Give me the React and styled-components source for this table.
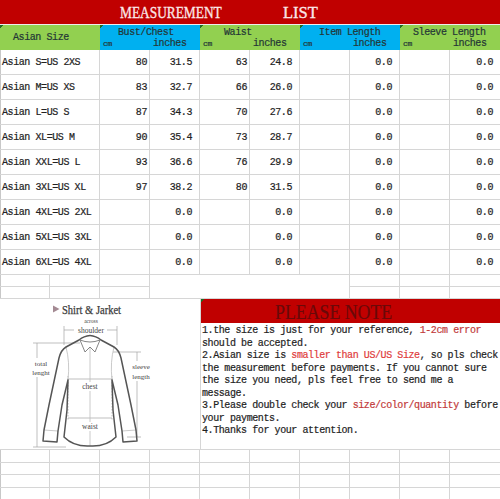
import React from 'react';
import styled, { createGlobalStyle } from 'styled-components';

const GRID = '#d6d6d6';
const RED = '#c00000';
const GREEN = '#92d050';
const BLUE = '#00b0f0';
const MONO = `"Liberation Mono", "DejaVu Sans Mono", monospace`;
const SERIF = `"Liberation Serif", "Times New Roman", serif`;

const GlobalStyle = createGlobalStyle`
  html, body { margin: 0; padding: 0; background: #fff; }
  body { font-family: ${MONO}; }
  * { box-sizing: border-box; }
`;

const Page = styled.div`
  width: 500px;
  height: 499px;
  overflow: hidden;
  background: #fff;
  box-shadow: inset 1px 0 0 #c8c8c8;
  font-family: ${MONO};
  font-size: 10px;
  letter-spacing: -0.42px;
  -webkit-text-stroke: 0.2px currentColor;
  color: #222;
  display: flex;
  flex-direction: column;
`;

const TitleBar = styled.div`
  height: 24px;
  flex: none;
  background: ${RED};
  display: flex;
  align-items: center;
  padding: 1.5px 0 0 120px;
  color: #fbe6e6;
  font-family: ${SERIF};
  font-size: 16.5px;
  letter-spacing: 0;
  -webkit-text-stroke: 0.35px currentColor;
  line-height: 1;
`;

const TitleWord = styled.span`
  display: inline-block;
  flex: none;
  width: ${p => p.$w}px;
  transform: scaleX(${p => p.$sx || 1});
  transform-origin: left center;
  white-space: nowrap;
`;

const HeaderRow = styled.div`
  height: 26px;
  flex: none;
  display: grid;
  grid-template-columns: repeat(5, 100px);
  border-top: 1px solid #eeeeee;
  color: #243636;
`;

const HeaderCell = styled.div`
  background: linear-gradient(135deg, #236b23 0 2.5px, transparent 2.5px), ${p => p.$bg};
  display: flex;
  flex-direction: column;
  justify-content: ${p => (p.$single ? 'center' : 'flex-start')};
  padding-top: ${p => (p.$single ? 0 : 1.5)}px;
  white-space: nowrap;
`;

const HeaderTitle = styled.div`
  line-height: 11px;
  padding-left: ${p => p.$indent}px;
`;

const SubHeads = styled.div`
  display: grid;
  grid-template-columns: 50px 50px;
  margin-top: 0.5px;
  line-height: 11px;
  align-items: end;
`;

const Unit = styled.span`
  padding-left: 3px;
  font-size: ${p => (p.$small ? 8 : 10)}px;
  letter-spacing: ${p => (p.$small ? -0.3 : -0.42)}px;
`;

const DataRow = styled.div`
  height: 25px;
  flex: none;
  display: grid;
  grid-template-columns: 100px repeat(8, 50px);
`;

const Cell = styled.div`
  border-right: 1px solid ${GRID};
  border-bottom: 1px solid ${GRID};
  display: flex;
  align-items: center;
  justify-content: ${p => (p.$left ? 'flex-start' : 'flex-end')};
  padding: 0 ${p => p.$pr ?? 2}px 0 ${p => (p.$left ? 2 : 0)}px;
  white-space: nowrap;
  &:last-child { border-right: none; }
`;

const Band = styled.div`
  flex: none;
  display: grid;
  grid-template-columns: repeat(10, 50px);
  grid-auto-rows: ${p => p.$h}px;
  border-top: ${p => (p.$top ? `1px solid ${GRID}` : 'none')};
`;

const GridCell = styled.div`
  border-right: ${p => (p.$noRight ? 'none' : `1px solid ${GRID}`)};
  border-bottom: ${p => (p.$noBottom ? 'none' : `1px solid ${GRID}`)};
  &:nth-child(10n) { border-right: none; }
`;

const Lower = styled.div`
  height: 150px;
  flex: none;
  display: flex;
`;

const ShirtPanel = styled.div`
  width: 200px;
  flex: none;
  background: #fff;
  -webkit-text-stroke: 0;
`;

const NotePanel = styled.div`
  width: 300px;
  flex: none;
  border-left: 1px solid ${GRID};
  display: flex;
  flex-direction: column;
  background: #fff;
`;

const NoteHeader = styled.div`
  height: 24px;
  flex: none;
  background: linear-gradient(135deg, #236b23 0 2.5px, transparent 2.5px), ${RED};
  display: flex;
  align-items: center;
  padding: 1px 0 0 74px;
  font-family: ${SERIF};
  font-size: 20px;
  letter-spacing: 0;
  -webkit-text-stroke: 0.2px currentColor;
  line-height: 1;
  color: #6a0909;
`;

const NoteBody = styled.div`
  padding: 2px 0 0 1px;
  line-height: 12.5px;
  color: #1e1e1e;
`;

const NoteLine = styled.div`
  white-space: pre;
`;

const Hi = styled.span`
  color: ${p => (p.$strong ? '#e03c3c' : '#c23a3a')};
`;

const ROWS = [
  ['Asian S=US 2XS', '80', '31.5', '63', '24.8'],
  ['Asian M=US XS', '83', '32.7', '66', '26.0'],
  ['Asian L=US S', '87', '34.3', '70', '27.6'],
  ['Asian XL=US M', '90', '35.4', '73', '28.7'],
  ['Asian XXL=US L', '93', '36.6', '76', '29.9'],
  ['Asian 3XL=US XL', '97', '38.2', '80', '31.5'],
  ['Asian 4XL=US 2XL', '', '0.0', '', '0.0'],
  ['Asian 5XL=US 3XL', '', '0.0', '', '0.0'],
  ['Asian 6XL=US 4XL', '', '0.0', '', '0.0'],
];

const GROUPS = [
  { title: 'Bust/Chest', indent: 18, bg: BLUE },
  { title: 'Waist', indent: 24, bg: GREEN },
  { title: 'Item Length', indent: 19, bg: BLUE },
  { title: 'Sleeve Length', indent: 13, bg: GREEN },
];

const Label = ({ x, y, size = 7.5, children }) => (
  <text x={x} y={y} fontSize={size} textAnchor="middle" fill="#444" fontFamily={SERIF} stroke="none" letterSpacing="0">
    {children}
  </text>
);

const LEFT_HALF =
  'M90 335.5 Q84 336 79 340 L66 347 Q61 350 59 358 L49 405 L44 430 L43 441 L57 442 L58 431 L62 405 L68 380 L67 410 L64 437 Q74 447 90 446';

const ShirtDrawing = () => (
  <svg width="200" height="150" viewBox="0 299 200 150">
    <g fill="none" stroke="#a3a3a3" strokeWidth="0.7">
      <line x1="64" y1="326" x2="64" y2="345" />
      <line x1="117" y1="326" x2="117" y2="345" />
      <line x1="64" y1="330" x2="117" y2="330" />
      <line x1="37" y1="343" x2="37" y2="447" />
      <line x1="33" y1="343" x2="80" y2="343" />
      <line x1="33" y1="447" x2="66" y2="447" />
      <line x1="137" y1="352" x2="137" y2="437" />
      <line x1="113" y1="352" x2="141" y2="352" />
      <line x1="127" y1="437" x2="141" y2="437" />
      <line x1="67" y1="379" x2="113" y2="379" />
      <line x1="68" y1="418" x2="112" y2="418" />
      <line x1="68" y1="376" x2="68" y2="421" strokeDasharray="1.5 1.5" />
      <line x1="112" y1="376" x2="112" y2="421" strokeDasharray="1.5 1.5" />
    </g>
    <g fill="none" stroke="#bdbdbd" strokeWidth="0.8">
      <line x1="90" y1="347" x2="90" y2="446" />
      <path d="M66 347 Q70 362 68 380" />
      <path d="M114 347 Q110 362 112 380" />
      <line x1="44" y1="430" x2="58" y2="431" />
      <line x1="136" y1="430" x2="122" y2="431" />
    </g>
    <g fill="none" stroke="#555" strokeWidth="1.5" strokeLinejoin="round">
      <path d={LEFT_HALF} />
      <path d={LEFT_HALF} transform="translate(180 0) scale(-1 1)" />
    </g>
    <g fill="none" stroke="#777" strokeWidth="0.9" strokeLinejoin="round">
      <path d="M80 340 L85 352 L90 347 L95 352 L100 340" />
      <path d="M80 340 Q90 344 100 340" />
    </g>
    <g fill="#fff" stroke="none">
      <rect x="74" y="326" width="33" height="8" />
      <rect x="30" y="358" width="21" height="19" />
      <rect x="129" y="361" width="24" height="20" />
      <rect x="80" y="382" width="20" height="9" />
      <rect x="80" y="422" width="20" height="9" />
    </g>
    <polygon points="53,305.5 53,312.5 59.5,309" fill="#a48a93" />
    <text x="62" y="313.5" fontSize="12" fill="#3c3c3c" stroke="#3c3c3c" strokeWidth="0.25" fontFamily={SERIF} letterSpacing="0" textLength="59" lengthAdjust="spacingAndGlyphs">
      Shirt &amp; Jarket
    </text>
    <Label x={91} y={322.5} size={5.5}>across</Label>
    <Label x={91} y={332.5}>shoulder</Label>
    <Label x={41} y={366} size={7}>total</Label>
    <Label x={41} y={375} size={7}>lenght</Label>
    <Label x={141} y={369} size={7}>sleeve</Label>
    <Label x={141} y={378.5} size={7}>length</Label>
    <Label x={90} y={389}>chest</Label>
    <Label x={90} y={429}>waist</Label>
  </svg>
);

const fillerCells = () => {
  const cells = [];
  for (let r = 0; r < 2; r += 1) {
    for (let c = 0; c < 10; c += 1) {
      const blank = c >= 3 && c <= 6;
      cells.push(
        <GridCell
          key={`${r}-${c}`}
          $noRight={c >= 3 && c <= 5}
          $noBottom={r === 0 && blank}
        />
      );
    }
  }
  return cells;
};

export default function App() {
  return (
    <>
      <GlobalStyle />
      <Page>
        <TitleBar>
          <TitleWord $w={163} $sx={0.81}>MEASUREMENT</TitleWord>
          <TitleWord $w={40}>LIST</TitleWord>
        </TitleBar>

        <HeaderRow>
          <HeaderCell $bg={GREEN} $single>
            <HeaderTitle $indent={13}>Asian Size</HeaderTitle>
          </HeaderCell>
          {GROUPS.map(g => (
            <HeaderCell key={g.title} $bg={g.bg}>
              <HeaderTitle $indent={g.indent}>{g.title}</HeaderTitle>
              <SubHeads>
                <Unit $small>cm</Unit>
                <Unit>inches</Unit>
              </SubHeads>
            </HeaderCell>
          ))}
        </HeaderRow>

        {ROWS.map(r => (
          <DataRow key={r[0]}>
            <Cell $left>{r[0]}</Cell>
            <Cell $pr={2}>{r[1]}</Cell>
            <Cell $pr={7}>{r[2]}</Cell>
            <Cell $pr={2}>{r[3]}</Cell>
            <Cell $pr={7}>{r[4]}</Cell>
            <Cell $pr={2} />
            <Cell $pr={7}>0.0</Cell>
            <Cell $pr={2} />
            <Cell $pr={7}>0.0</Cell>
          </DataRow>
        ))}

        <Band $h={12}>{fillerCells()}</Band>

        <Lower>
          <ShirtPanel>
            <ShirtDrawing />
          </ShirtPanel>
          <NotePanel>
            <NoteHeader>
              <TitleWord $w={140} $sx={0.89}>PLEASE NOTE</TitleWord>
            </NoteHeader>
            <NoteBody>
              <NoteLine>1.the size is just for your reference, <Hi>1-2cm error</Hi></NoteLine>
              <NoteLine>should be accepted.</NoteLine>
              <NoteLine>2.Asian size is <Hi $strong>smaller than US/US Size</Hi>, so pls check</NoteLine>
              <NoteLine>the measurement before payments. If you cannot sure</NoteLine>
              <NoteLine>the size you need, pls feel free to send me a</NoteLine>
              <NoteLine>message.</NoteLine>
              <NoteLine>3.Please double check your <Hi>size/color/quantity</Hi> before</NoteLine>
              <NoteLine>your payments.</NoteLine>
              <NoteLine>4.Thanks for your attention.</NoteLine>
            </NoteBody>
          </NotePanel>
        </Lower>

        <Band $h={12.5} $top>
          {Array.from({ length: 40 }, (_, i) => (
            <GridCell key={i} />
          ))}
        </Band>
      </Page>
    </>
  );
}
